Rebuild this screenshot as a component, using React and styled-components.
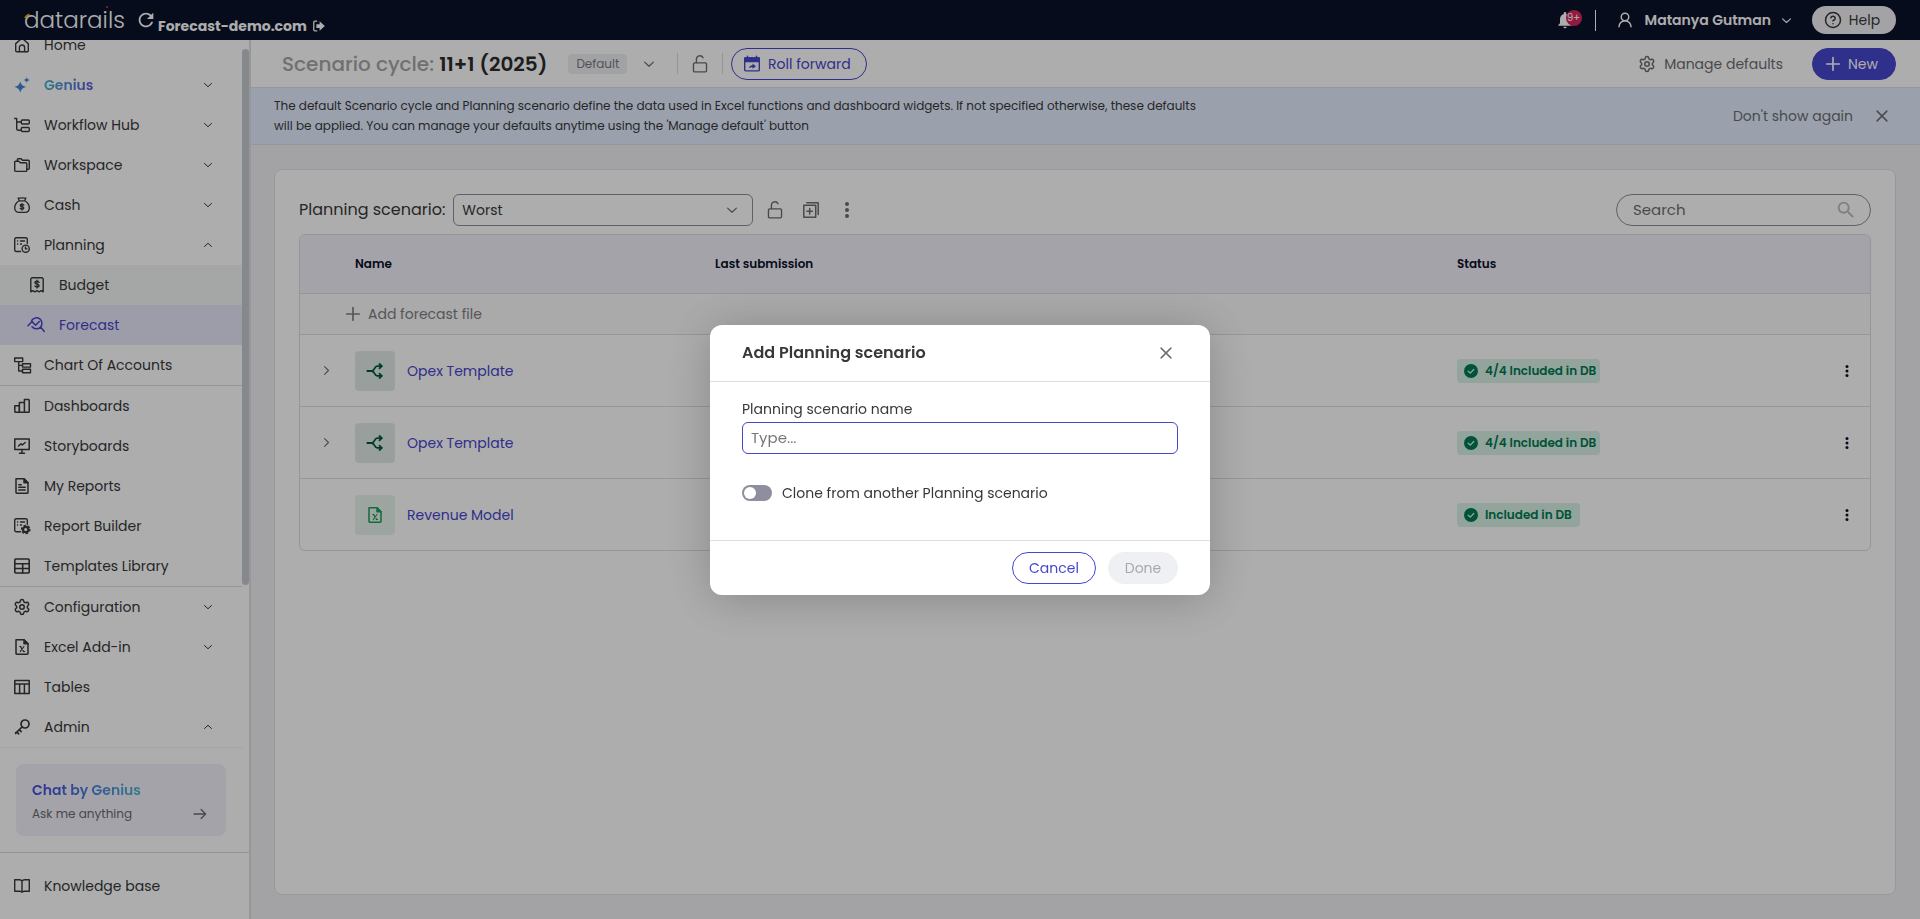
import React, { useState } from "react";
import styled, { createGlobalStyle, css } from "styled-components";
import { CircleHelp, Settings, UserRound } from "lucide-react";
import { MdNotifications, MdRefresh, MdSearch } from "react-icons/md";

const GlobalStyle = createGlobalStyle`
  * {
    box-sizing: border-box;
  }
  body {
    margin: 0;
    background: #f0f1f4;
    color: #38383b;
    font-family: Poppins, Inter, sans-serif;
    font-size: 14px;
    line-height: 20px;
  }
  button, input, select {
    font: inherit;
    color: inherit;
  }
  button {
    padding: 0;
    border: 0;
    background: none;
    cursor: pointer;
  }
  a {
    color: inherit;
    text-decoration: none;
  }
  svg {
    flex-shrink: 0;
  }
`;

/* ---------- icons ---------- */

const Svg = styled.svg`
  display: block;
  fill: none;
  stroke: currentColor;
  stroke-linecap: round;
  stroke-linejoin: round;
  overflow: visible;
`;

const Icon = ({ size = 16, weight = 1.4, children }) => (
  <Svg width={size} height={size} viewBox="0 0 16 16" strokeWidth={weight} aria-hidden="true">
    {children}
  </Svg>
);

const HomeIcon = () => (
  <Icon>
    <path d="M1.7 6.6 8 1.2l6.3 5.4v7a1.2 1.2 0 0 1-1.2 1.2H2.9a1.2 1.2 0 0 1-1.2-1.2z" />
    <path d="M5.4 14.6v-4a2.6 2.6 0 0 1 5.2 0v4" />
  </Icon>
);
const SparkIcon = () => (
  <Icon>
    <g fill="#3f86d4" stroke="none">
      <path d="M6.3 4.2c.9 3.6 2.2 4.8 6.1 5.7-3.9.9-5.2 2.2-6.1 5.8-.9-3.6-2.2-4.9-6.1-5.8 3.9-.9 5.2-2.1 6.1-5.7z" />
      <path d="M12.7 0c.4 1.9 1 2.5 3.2 3-2.2.5-2.8 1.1-3.2 3-.4-1.9-1-2.5-3.2-3 2.2-.5 2.800-1.100 3.200-3z" />
    </g>
  </Icon>
);
const WorkflowIcon = () => (
  <Icon>
    <path d="M.7 1.5h2v10.2a1.5 1.5 0 0 0 1.5 1.5h3M2.7 5h4.300" />
    <rect x="7.3" y="3" width="8" height="4" rx="1" />
    <rect x="7.3" y="10.5" width="8" height="4" rx="1" />
  </Icon>
);
const FoldersIcon = () => (
  <Icon>
    <path d="M.7 5.2a1 1 0 0 1 1-1h3.1l1.500 1.600h5.500a1 1 0 0 1 1 1v6.600a1 1 0 0 1-1 1H1.700a1 1 0 0 1-1-1z" />
    <path d="M3.300 4V2.700a1 1 0 0 1 1-1h2.800l1.500 1.600h5.700a1 1 0 0 1 1 1v7a1 1 0 0 1-1 1h-1.300" />
  </Icon>
);
const MoneyBagIcon = () => (
  <Icon weight={1.3}>
    <path d="M5.200 3.600 4.100 1.100c1.300.5 2.600-.6 3.900-.1 1.300-.5 2.600.6 3.900.1l-1.100 2.500M5.200 3.800h5.600c2.700 1.600 4.500 4.500 4.500 7.200 0 2.900-1.900 4.300-4.300 4.300H5c-2.400 0-4.300-1.400-4.300-4.300 0-2.700 1.800-5.600 4.500-7.200z" />
    <path d="M9.800 8.100c-.4-.6-1-.8-1.800-.8-1 0-1.700.4-1.700 1.200 0 1.700 3.500.7 3.500 2.400 0 .8-.7 1.200-1.800 1.200-.8 0-1.500-.3-1.900-.9M8 6.400v6.600" />
  </Icon>
);
const PlanIcon = () => (
  <Icon>
    <path d="M6.500 14.500H2.200a1.500 1.500 0 0 1-1.500-1.500V2.200A1.500 1.500 0 0 1 2.200.7h9.600a1.500 1.500 0 0 1 1.500 1.500v4.300" />
    <path d="M3.500 4h.2M6.500 4h4M3.500 7h.2M6.500 7h1" />
    <circle cx="11.7" cy="11.7" r="3.6" />
    <path d="M11.5 9.9v2h1.500" />
  </Icon>
);
const ReceiptIcon = () => (
  <Icon>
    <path d="M1.800 14.800V2.200A1.500 1.500 0 0 1 3.300.7h9.400a1.500 1.500 0 0 1 1.500 1.500v12.600l-2-1.200-2 1.200-2.200-1.200-2.200 1.200-2-1.200z" />
    <path d="M10 5.300c-.4-.7-1.100-1-2-1-1.200 0-2 .5-2 1.400 0 2 4 .9 4 2.900 0 1-.8 1.500-2 1.500-.9 0-1.700-.4-2.100-1.100M8 3.300v7.800" />
  </Icon>
);
const ForecastIcon = () => (
  <Icon weight={1.5}>
    <path d="M-1 8.800 3 4.600l3.600 3.600 3.700-3.700" />
    <path d="M2.700 3.500a5.500 5.500 0 1 1 .4 6.200M11.900 10.300l3.400 4.200" />
  </Icon>
);
const AccountsIcon = () => (
  <Icon>
    <rect x=".7" y="1" width="8" height="3.6" />
    <rect x="8.5" y="6.7" width="8" height="3.4" />
    <rect x="8.5" y="12.3" width="8" height="3.4" />
    <path d="M4.700 4.600v9.400h3.800M4.700 8.400h3.800" />
  </Icon>
);
const BarsIcon = () => (
  <Icon weight={1.5}>
    <path d="M.8 7.800h4.400v6.500H1.600a.8.800 0 0 1-.8-.8zM5.400 4.400h5v9.900h-5zM10.400 1.500h4.100a.7.700 0 0 1 .7.700v11.400a.7.700 0 0 1-.7.700h-4.100z" />
  </Icon>
);
const BoardIcon = () => (
  <Icon weight={1.5}>
    <rect x=".8" y="1" width="14.4" height="10.6" />
    <path d="M4.500 8 7 5.700 8.300 7l2.900-2.500M8 12v3M5.500 15.200h5" />
  </Icon>
);
const FileIcon = ({ children }) => (
  <Icon weight={1.5}>
    <path d="M2 .8h8l4 4v9.700a.7.700 0 0 1-.7.700H2.700a.7.700 0 0 1-.7-.7z" />
    <path d="M10 .8v4h4z" fill="currentColor" />
    {children}
  </Icon>
);
const ReportIcon = () => (
  <FileIcon>
    <path d="M4.800 6.800h2.500M4.800 9.300h6.400M4.800 12h6.400" />
  </FileIcon>
);
const ExcelIcon = () => (
  <FileIcon>
    <path d="m6.300 7.500 3.600 5M9.900 7.500l-3.600 5M5.800 7.500h1.200M9.300 12.500h1.300" strokeWidth="1.2" />
  </FileIcon>
);
const BuilderIcon = () => (
  <Icon>
    <path d="M6.500 13.800H2.200a1.500 1.500 0 0 1-1.500-1.500V2.200A1.500 1.500 0 0 1 2.200.7h9.600a1.500 1.500 0 0 1 1.500 1.500v4.300" />
    <path d="M3.500 4h.2M6.500 4h4M3.500 7h.2M6.500 7h1" />
    <circle cx="11.7" cy="11.5" r="2.7" strokeWidth="2.2" />
    <circle cx="11.7" cy="11.5" r="4.2" strokeWidth="1.3" strokeDasharray="1.5 2.9" />
  </Icon>
);
const LayoutIcon = () => (
  <Icon weight={1.6}>
    <rect x=".8" y="1" width="14.4" height="14" rx="1" />
    <path d="M.8 5.800h14.400M8.700 5.800V15M.8 10.500h14.400" />
  </Icon>
);
const TableIcon = () => (
  <Icon weight={1.5}>
    <rect x=".8" y="1.5" width="14.4" height="13" />
    <path d="M.8 5h14.400M5.600 5v9.500M10.400 5v9.500" />
  </Icon>
);
const KeyIcon = () => (
  <Icon weight={1.7}>
    <circle cx="11" cy="5" r="4" />
    <path d="m8 8-6.200 6.200M5.300 10.700l1.900 2M3 13l1.700 1.800M1.700 13.500v1" />
  </Icon>
);
const BookIcon = () => (
  <Icon>
    <path d="M8 3.200C7.500 2.300 6.600 1.800 5.500 1.800H.7v11.400h5c1.200 0 2 .4 2.300 1.100.3-.7 1.100-1.100 2.300-1.100h5V1.800h-4.800C9.400 1.800 8.500 2.300 8 3.200zM8 3.200v11" />
  </Icon>
);
const ChevronIcon = ({ dir = "down", size = 8, weight = 2 }) => {
  const paths = {
    down: "m1 5 7 6.5L15 5",
    up: "m1 11 7-6.5 7 6.5",
    right: "m4.5 1 7 7-7 7",
  };
  return (
    <Icon size={size} weight={weight}>
      <path d={paths[dir]} />
    </Icon>
  );
};
const LockIcon = () => (
  <Icon size={18} weight={1.2}>
    <rect x="2.2" y="7" width="11.6" height="8" rx="1" />
    <path d="M4.800 6.800V3.900A3.100 3.100 0 0 1 10.700 2.500" />
  </Icon>
);
const DuplicateIcon = () => (
  <Icon weight={1.5}>
    <rect x=".8" y="3.3" width="11.9" height="11.9" />
    <path d="M3.800.8h11.400v11.700M6.700 6.500v5.400M4 9.200h5.400" />
  </Icon>
);
const DotsIcon = ({ size }) => (
  <Icon size={size}>
    <g fill="currentColor" stroke="none">
      <circle cx="8" cy="2" r="2" />
      <circle cx="8" cy="8" r="2" />
      <circle cx="8" cy="14" r="2" />
    </g>
  </Icon>
);
const CloseIcon = () => (
  <Icon size={12} weight={2}>
    <path d="m1.500 1.500 13 13M14.500 1.500l-13 13" />
  </Icon>
);
const PlusIcon = () => (
  <Icon size={14} weight={1.9}>
    <path d="M8 .8v14.400M.8 8h14.400" />
  </Icon>
);
const ArrowIcon = () => (
  <Icon size={12} weight={1.7}>
    <path d="M0 8h15.500M9.500 2l6 6-6 6" />
  </Icon>
);
const SignOutIcon = () => (
  <Icon size={12} weight={1.7}>
    <path d="M5 1.500H2.500A1.500 1.500 0 0 0 1 3v10a1.500 1.500 0 0 0 1.500 1.500H5" />
    <path d="M4.500 5.500h4.300V1.800L15.800 8l-7 6.200v-3.700H4.500z" fill="currentColor" stroke="none" />
  </Icon>
);
const CalendarIcon = () => (
  <Icon>
    <rect x=".7" y="2" width="14.6" height="12.9" rx="1" />
    <path d="M.7 2h14.600v3.500H.7z" fill="currentColor" />
    <path d="M3.500.3v2M12.500.3v2" />
    <path d="M5 12c.4-1.800 1.500-2.700 3.500-2.700V7.600l3.500 2.700-3.500 2.500v-1.600C7 11.200 6 11.300 5 12z" fill="currentColor" stroke="none" />
  </Icon>
);
const BranchIcon = () => (
  <Icon weight={1.8}>
    <path d="M.3 8h4.400M14.500 3.200h-4.300C7.300 3.200 7.600 8 4.700 8c2.900 0 2.600 4.800 5.500 4.800h4.300" />
    <path d="m12.500 1 2.300 2.200-2.300 2.200M12.500 10.600l2.300 2.200-2.300 2.200" />
  </Icon>
);
const CheckBadgeIcon = () => (
  <Icon size={14}>
    <circle cx="8" cy="8" r="8" fill="#007a55" stroke="none" />
    <path d="m4.800 8.200 2.300 2.200 4-4.200" stroke="#d9f2e6" strokeWidth="1.5" />
  </Icon>
);

/* ---------- top bar ---------- */

const TopBar = styled.header`
  display: flex;
  justify-content: space-between;
  height: 40px;
  padding: 0 24px;
  background: #091228;
  color: #fff;
`;
const BarGroup = styled.div`
  display: flex;
  align-items: center;
`;
const Logo = styled.a`
  position: relative;
  width: 104px;
  margin-right: 7px;
  font-size: 23px;
  font-weight: 300;
  line-height: 44px;
`;
const LogoMarks = styled.svg`
  position: absolute;
  top: 0;
  left: 0;
`;
const Company = styled.a`
  display: flex;
  align-items: center;
  gap: 6px;
  padding: 12px 0 0 1px;
  font-weight: 700;
`;
const Bell = styled.button`
  position: relative;
  display: flex;
`;
const BellCount = styled.span`
  position: absolute;
  top: 0;
  right: -7px;
  width: 16px;
  height: 16px;
  border-radius: 50%;
  background: #d92560;
  font-size: 10px;
  line-height: 16px;
`;
const BarDivider = styled.span`
  width: 1px;
  height: 21px;
  margin: 0 20px;
  background: #fff;
`;
const UserButton = styled.button`
  display: flex;
  align-items: center;
  gap: 11px;
  margin-right: 21px;
  font-weight: 600;
`;
const HelpButton = styled.button`
  display: flex;
  align-items: center;
  justify-content: center;
  gap: 7px;
  width: 84px;
  height: 28px;
  padding-right: 4px;
  border-radius: 14px;
  background: #f1f1f3;
  color: #38383b;
`;

/* ---------- side bar ---------- */

const Layout = styled.div`
  display: flex;
  height: calc(100vh - 40px);
`;
const SideBar = styled.aside`
  display: flex;
  flex-direction: column;
  flex: 0 0 251px;
  border-right: 2px solid #dfdfe1;
  background: #fff;
`;
const ScrollArea = styled.div`
  display: flex;
  flex: 1;
  min-height: 0;
`;
const ScrollBody = styled.div`
  display: flex;
  flex-direction: column;
  flex: 1;
`;
const ScrollThumb = styled.div`
  width: 7px;
  height: 66%;
  margin-top: 9px;
  border-radius: 4px;
  background: #c5c9d0;
`;
const Nav = styled.nav`
  display: flex;
  flex-direction: column;
  justify-content: flex-end;
  flex: 1;
  min-height: 0;
  overflow: hidden;
`;
const NavItem = styled.a`
  display: flex;
  align-items: center;
  flex-shrink: 0;
  gap: 14px;
  height: 40px;
  padding: 0 30px 0 14px;
  ${({ $sub }) =>
    $sub &&
    css`
      padding-left: 29px;
      background: #f4f6f5;
    `}
  ${({ $active }) =>
    $active &&
    css`
      background: #e8e6fa;
      color: #4646ce;
    `}
`;
const IconSlot = styled.span`
  display: flex;
  justify-content: center;
  width: 16px;
`;
const NavLabel = styled.span`
  flex: 1;
  ${({ $genius }) =>
    $genius &&
    css`
      flex: none;
      margin-right: auto;
      font-weight: 600;
      background: linear-gradient(90deg, #4cb2d4, #5b56dc);
      background-clip: text;
      color: transparent;
    `}
`;
const NavRule = styled.div`
  flex-shrink: 0;
  height: 1px;
  background: ${({ $light }) => ($light ? "#f2f2f4" : "#dcdde1")};
`;
const ChatCard = styled.a`
  display: block;
  height: 72px;
  margin: 16px;
  padding: 16px;
  border-radius: 8px;
  background: #f2f1fa;
`;
const ChatTitle = styled.div`
  width: fit-content;
  font-weight: 600;
  background: linear-gradient(90deg, #4646dc, #4cb2d4);
  background-clip: text;
  color: transparent;
`;
const ChatText = styled.div`
  display: flex;
  align-items: center;
  justify-content: space-between;
  padding: 4px 4px 0 0;
  color: #6b6b70;
  font-size: 12px;
`;
const SideFooter = styled.div`
  padding: 13px 0;
  border-top: 1px solid #d9d9dc;
`;

/* ---------- main ---------- */

const Main = styled.main`
  display: flex;
  flex-direction: column;
  flex: 1;
  min-width: 0;
`;
const CycleBar = styled.div`
  display: flex;
  align-items: center;
  height: 48px;
  padding: 0 24px 0 31px;
  border-bottom: 1px solid #e0e0e4;
  background: #fff;
`;
const CycleTitle = styled.h1`
  margin: 0 21px 0 0;
  color: #a6a6aa;
  font-size: 20px;
  font-weight: 500;
  line-height: 28px;

  strong {
    color: #2b2b2e;
    font-weight: 600;
  }
`;
const Tag = styled.span`
  margin-right: 12px;
  padding: 0 8px;
  border-radius: 4px;
  background: #eeeff2;
  color: #7a7a7e;
  font-size: 12px;
`;
const IconButton = styled.button`
  display: flex;
  align-items: center;
  justify-content: center;
  width: 20px;
  height: 20px;
  color: #6e6e72;
`;
const Divider = styled.span`
  width: 1px;
  height: 21px;
  margin: 0 ${({ $after }) => $after}px 0 ${({ $before }) => $before}px;
  background: #dcdce0;
`;
const PillButton = styled.button`
  display: flex;
  align-items: center;
  justify-content: center;
  gap: 8px;
  width: ${({ $width }) => $width}px;
  height: 32px;
  padding-right: ${({ $icon }) => ($icon ? 4 : 0)}px;
  border-radius: 16px;
  border: 1px solid #4646ce;
  background: ${({ $solid }) => ($solid ? "#4646ce" : "transparent")};
  color: ${({ $solid }) => ($solid ? "#fff" : "#4646ce")};

  &:disabled {
    border-color: #eff0f4;
    background: #eff0f4;
    color: #a9a9ac;
    cursor: default;
  }
`;
const TextButton = styled.button`
  display: flex;
  align-items: center;
  gap: 8px;
  margin-left: auto;
  margin-right: ${({ $gap }) => $gap}px;
  color: #6e6e72;
`;
const Banner = styled.div`
  display: flex;
  align-items: center;
  padding: 8px 28px 8px 23px;
  border-bottom: 1px solid #dcdfe6;
  background: #e4eeff;

  p {
    max-width: 940px;
    margin: 0;
    font-size: 12px;
  }
`;
const Panel = styled.section`
  flex: 1;
  margin: 24px 24px 24px 23px;
  padding: 24px;
  border: 1px solid #e0e1e6;
  border-radius: 8px;
  background: #fff;
`;
const Toolbar = styled.div`
  display: flex;
  align-items: center;
  margin-bottom: 8px;
`;
const ScenarioLabel = styled.label`
  margin-right: 8px;
  font-size: 16px;
`;
const SelectBox = styled.div`
  display: flex;
  align-items: center;
  width: 300px;
  height: 32px;
  margin-right: 12px;
  padding-right: 15px;
  border: 1px solid #8e8e9c;
  border-radius: 6px;
  color: #6e6e72;

  select {
    flex: 1;
    height: 30px;
    padding: 0 8px;
    border: 0;
    outline: 0;
    background: none;
    color: #38383b;
    appearance: none;
  }
`;
const ToolButtons = styled.div`
  display: flex;
  gap: 16px;
`;
const SearchBox = styled.div`
  display: flex;
  align-items: center;
  width: 255px;
  height: 32px;
  margin-left: auto;
  padding: 0 13px 0 16px;
  border: 1px solid #8e8e9c;
  border-radius: 16px;
  color: #bcbcc0;

  input {
    flex: 1;
    min-width: 0;
    padding: 0;
    border: 0;
    outline: 0;
    background: none;
    font-size: 15px;
  }
  input::placeholder {
    color: #6e6e72;
  }
`;
const Table = styled.table`
  width: 100%;
  border: 1px solid #dedee3;
  border-radius: 6px;
  border-spacing: 0;
  table-layout: fixed;
  overflow: hidden;
`;
const HeadCell = styled.th`
  width: ${({ $width }) => ($width ? `${$width}px` : "auto")};
  height: 59px;
  padding: 0;
  border-bottom: 1px solid #dedee3;
  background: #f2f1fa;
  color: #0b1129;
  font-size: 12px;
  font-weight: 600;
  text-align: left;
`;
const Cell = styled.td`
  height: 72px;
  padding: 0;
  border-bottom: 1px solid #dedee3;

  tr:last-child > & {
    height: 71px;
    border-bottom: 0;
  }
`;
const AddCell = styled(Cell)`
  height: 41px;
  padding-left: 46px;
  background: #fbfbfc;
`;
const AddButton = styled.button`
  display: flex;
  align-items: center;
  gap: 8px;
  color: #7e7e82;
`;
const Expander = styled.button`
  display: flex;
  margin-left: 22px;
  padding: 4px 0;
  color: #6e6e72;
`;
const FileLink = styled.a`
  display: flex;
  align-items: center;
  gap: 12px;
  color: #4646ce;
`;
const FileBadge = styled.span`
  display: flex;
  align-items: center;
  justify-content: center;
  width: 40px;
  height: 40px;
  border-radius: 4px;
  background: ${({ $excel }) => ($excel ? "#e6f4ec" : "#e0ebe6")};
  color: ${({ $excel }) => ($excel ? "#1f9d55" : "#00573a")};
`;
const Status = styled.span`
  display: inline-flex;
  align-items: center;
  gap: 7px;
  height: 24px;
  padding: 0 ${({ $wide }) => ($wide ? 8 : 4)}px 0 7px;
  border-radius: 4px;
  background: #d9f2e6;
  color: #007a55;
  font-size: 12px;
  font-weight: 600;
`;
const RowMenu = styled.button`
  display: flex;
  margin-left: 19px;
  color: #0b1129;
`;

/* ---------- dialog ---------- */

const Backdrop = styled.div`
  position: fixed;
  inset: 0;
  display: flex;
  align-items: center;
  justify-content: center;
  background: rgba(0, 0, 0, 0.32);
`;
const Dialog = styled.form`
  width: 500px;
  border-radius: 12px;
  background: #fff;
  box-shadow: 0 4px 48px rgba(0, 0, 0, 0.22);
`;
const DialogHeader = styled.div`
  display: flex;
  align-items: center;
  justify-content: space-between;
  height: 57px;
  padding: 0 34px 0 32px;
  border-bottom: 1px solid #dedee0;

  h2 {
    margin: 0;
    font-size: 16px;
    font-weight: 600;
  }
`;
const DialogBody = styled.div`
  padding: 17px 32px 37px;

  > label {
    display: block;
    margin-bottom: 3px;
  }
`;
const NameInput = styled.input`
  display: block;
  width: 100%;
  height: 32px;
  margin-bottom: 29px;
  padding: 0 8px;
  border: 1px solid #4646ce;
  border-radius: 6px;
  outline: 0;
  font-size: 15px;

  &::placeholder {
    color: #77777b;
  }
`;
const SwitchRow = styled.div`
  display: flex;
  align-items: center;
  gap: 10px;
`;
const Switch = styled.input`
  appearance: none;
  display: flex;
  align-items: center;
  width: 30px;
  height: 16px;
  margin: 0;
  padding: 2px;
  border-radius: 8px;
  background: #8e8e9e;

  &::before {
    content: "";
    width: 12px;
    height: 12px;
    border-radius: 50%;
    background: #fff;
  }
  &:checked {
    justify-content: flex-end;
    background: #4646ce;
  }
`;
const DialogFooter = styled.div`
  display: flex;
  justify-content: flex-end;
  gap: 12px;
  padding: 11px 32px;
  border-top: 1px solid #dedee0;
`;

const menu = [
  { label: "Home", icon: <HomeIcon /> },
  { label: "Genius", icon: <SparkIcon />, chevron: "down", genius: true },
  { label: "Workflow Hub", icon: <WorkflowIcon />, chevron: "down" },
  { label: "Workspace", icon: <FoldersIcon />, chevron: "down" },
  { label: "Cash", icon: <MoneyBagIcon />, chevron: "down" },
  { label: "Planning", icon: <PlanIcon />, chevron: "up" },
  { label: "Budget", icon: <ReceiptIcon />, sub: true },
  { label: "Forecast", icon: <ForecastIcon />, sub: true, active: true },
  { label: "Chart Of Accounts", icon: <AccountsIcon />, rule: true },
  { label: "Dashboards", icon: <BarsIcon /> },
  { label: "Storyboards", icon: <BoardIcon /> },
  { label: "My Reports", icon: <ReportIcon /> },
  { label: "Report Builder", icon: <BuilderIcon /> },
  { label: "Templates Library", icon: <LayoutIcon />, rule: true },
  { label: "Configuration", icon: <Settings size={18} strokeWidth={2} />, chevron: "down" },
  { label: "Excel Add-in", icon: <ExcelIcon />, chevron: "down" },
  { label: "Tables", icon: <TableIcon /> },
  { label: "Admin", icon: <KeyIcon />, chevron: "up" },
];

const files = [
  { id: 1, name: "Opex Template", status: "4/4 Included in DB", group: true },
  { id: 2, name: "Opex Template", status: "4/4 Included in DB", group: true },
  { id: 3, name: "Revenue Model", status: "Included in DB", group: false },
];

function Header() {
  return (
    <TopBar>
      <BarGroup>
        <Logo href="#home">
          datarails
          <LogoMarks width="104" height="40" aria-hidden="true">
            <path d="M1 20c1-2 2.5-3 4.5-3.5" fill="none" stroke="#f5a81c" strokeWidth="2" />
            <circle cx="83" cy="9" r="1" fill="#e0286e" />
          </LogoMarks>
        </Logo>
        <MdRefresh size={22} />
        <Company href="#company">
          Forecast-demo.com
          <SignOutIcon />
        </Company>
      </BarGroup>
      <BarGroup>
        <Bell aria-label="Notifications">
          <MdNotifications size={20} />
          <BellCount>9+</BellCount>
        </Bell>
        <BarDivider />
        <UserButton>
          <UserRound size={18} strokeWidth={2} />
          Matanya Gutman
          <ChevronIcon size={9} />
        </UserButton>
        <HelpButton>
          <CircleHelp size={18} strokeWidth={2} />
          Help
        </HelpButton>
      </BarGroup>
    </TopBar>
  );
}

function Menu() {
  return (
    <SideBar>
      <ScrollArea>
        <ScrollBody>
          <Nav>
            {menu.map((item) => (
              <React.Fragment key={item.label}>
                <NavItem href="#" $sub={item.sub} $active={item.active}>
                  <IconSlot>{item.icon}</IconSlot>
                  <NavLabel $genius={item.genius}>{item.label}</NavLabel>
                  {item.chevron && <ChevronIcon dir={item.chevron} />}
                </NavItem>
                {item.rule && <NavRule />}
              </React.Fragment>
            ))}
            <NavRule $light />
          </Nav>
          <ChatCard href="#chat">
            <ChatTitle>Chat by Genius</ChatTitle>
            <ChatText>
              Ask me anything
              <ArrowIcon />
            </ChatText>
          </ChatCard>
        </ScrollBody>
        <ScrollThumb />
      </ScrollArea>
      <SideFooter>
        <NavItem href="#knowledge">
          <BookIcon />
          <NavLabel>Knowledge base</NavLabel>
        </NavItem>
      </SideFooter>
    </SideBar>
  );
}

function FileTable() {
  return (
    <Table>
      <thead>
        <tr>
          <HeadCell $width={55} aria-label="Expand" />
          <HeadCell $width={360}>Name</HeadCell>
          <HeadCell>Last submission</HeadCell>
          <HeadCell $width={365}>Status</HeadCell>
          <HeadCell $width={48} aria-label="Actions" />
        </tr>
      </thead>
      <tbody>
        <tr>
          <AddCell colSpan={5}>
            <AddButton>
              <PlusIcon />
              Add forecast file
            </AddButton>
          </AddCell>
        </tr>
        {files.map((file) => (
          <tr key={file.id}>
            <Cell>
              {file.group && (
                <Expander aria-label="Expand">
                  <ChevronIcon dir="right" size={9} />
                </Expander>
              )}
            </Cell>
            <Cell>
              <FileLink href="#file">
                <FileBadge $excel={!file.group}>{file.group ? <BranchIcon /> : <ExcelIcon />}</FileBadge>
                {file.name}
              </FileLink>
            </Cell>
            <Cell />
            <Cell>
              <Status $wide={!file.group}>
                <CheckBadgeIcon />
                {file.status}
              </Status>
            </Cell>
            <Cell>
              <RowMenu aria-label="More">
                <DotsIcon size={12} />
              </RowMenu>
            </Cell>
          </tr>
        ))}
      </tbody>
    </Table>
  );
}

function AddScenario() {
  const [name, setName] = useState("");
  const [clone, setClone] = useState(false);

  return (
    <Backdrop>
      <Dialog role="dialog" aria-labelledby="dialog-title" onSubmit={(e) => e.preventDefault()}>
        <DialogHeader>
          <h2 id="dialog-title">Add Planning scenario</h2>
          <IconButton type="button" aria-label="Close">
            <CloseIcon />
          </IconButton>
        </DialogHeader>
        <DialogBody>
          <label htmlFor="scenario-name">Planning scenario name</label>
          <NameInput
            id="scenario-name"
            placeholder="Type..."
            value={name}
            onChange={(e) => setName(e.target.value)}
          />
          <SwitchRow>
            <Switch
              id="clone"
              type="checkbox"
              role="switch"
              checked={clone}
              onChange={(e) => setClone(e.target.checked)}
            />
            <label htmlFor="clone">Clone from another Planning scenario</label>
          </SwitchRow>
        </DialogBody>
        <DialogFooter>
          <PillButton type="button" $width={84}>
            Cancel
          </PillButton>
          <PillButton $width={70} disabled={!name}>
            Done
          </PillButton>
        </DialogFooter>
      </Dialog>
    </Backdrop>
  );
}

function App() {
  return (
    <>
      <GlobalStyle />
      <Header />
      <Layout>
        <Menu />
        <Main>
          <CycleBar>
            <CycleTitle>
              Scenario cycle: <strong>11+1 (2025)</strong>
            </CycleTitle>
            <Tag>Default</Tag>
            <IconButton aria-label="Choose cycle">
              <ChevronIcon size={10} />
            </IconButton>
            <Divider $before={18} $after={12} />
            <IconButton aria-label="Unlock cycle">
              <LockIcon />
            </IconButton>
            <Divider $before={12} $after={8} />
            <PillButton $width={136} $icon>
              <CalendarIcon />
              Roll forward
            </PillButton>
            <TextButton $gap={29}>
              <Settings size={18} strokeWidth={2} />
              Manage defaults
            </TextButton>
            <PillButton $width={84} $icon $solid>
              <PlusIcon />
              New
            </PillButton>
          </CycleBar>
          <Banner>
            <p>
              The default Scenario cycle and Planning scenario define the data used in Excel functions and dashboard
              widgets. If not specified otherwise, these defaults will be applied. You can manage your defaults anytime
              using the 'Manage default' button
            </p>
            <TextButton $gap={19}>Don't show again</TextButton>
            <IconButton aria-label="Close">
              <CloseIcon />
            </IconButton>
          </Banner>
          <Panel>
            <Toolbar>
              <ScenarioLabel htmlFor="scenario">Planning scenario:</ScenarioLabel>
              <SelectBox>
                <select id="scenario" defaultValue="Worst">
                  <option>Worst</option>
                </select>
                <ChevronIcon size={10} />
              </SelectBox>
              <ToolButtons>
                <IconButton aria-label="Unlock scenario">
                  <LockIcon />
                </IconButton>
                <IconButton aria-label="Duplicate scenario">
                  <DuplicateIcon />
                </IconButton>
                <IconButton aria-label="More">
                  <DotsIcon size={16} />
                </IconButton>
              </ToolButtons>
              <SearchBox>
                <input type="search" placeholder="Search" aria-label="Search" />
                <MdSearch size={22} />
              </SearchBox>
            </Toolbar>
            <FileTable />
          </Panel>
        </Main>
      </Layout>
      <AddScenario />
    </>
  );
}

export default App;
